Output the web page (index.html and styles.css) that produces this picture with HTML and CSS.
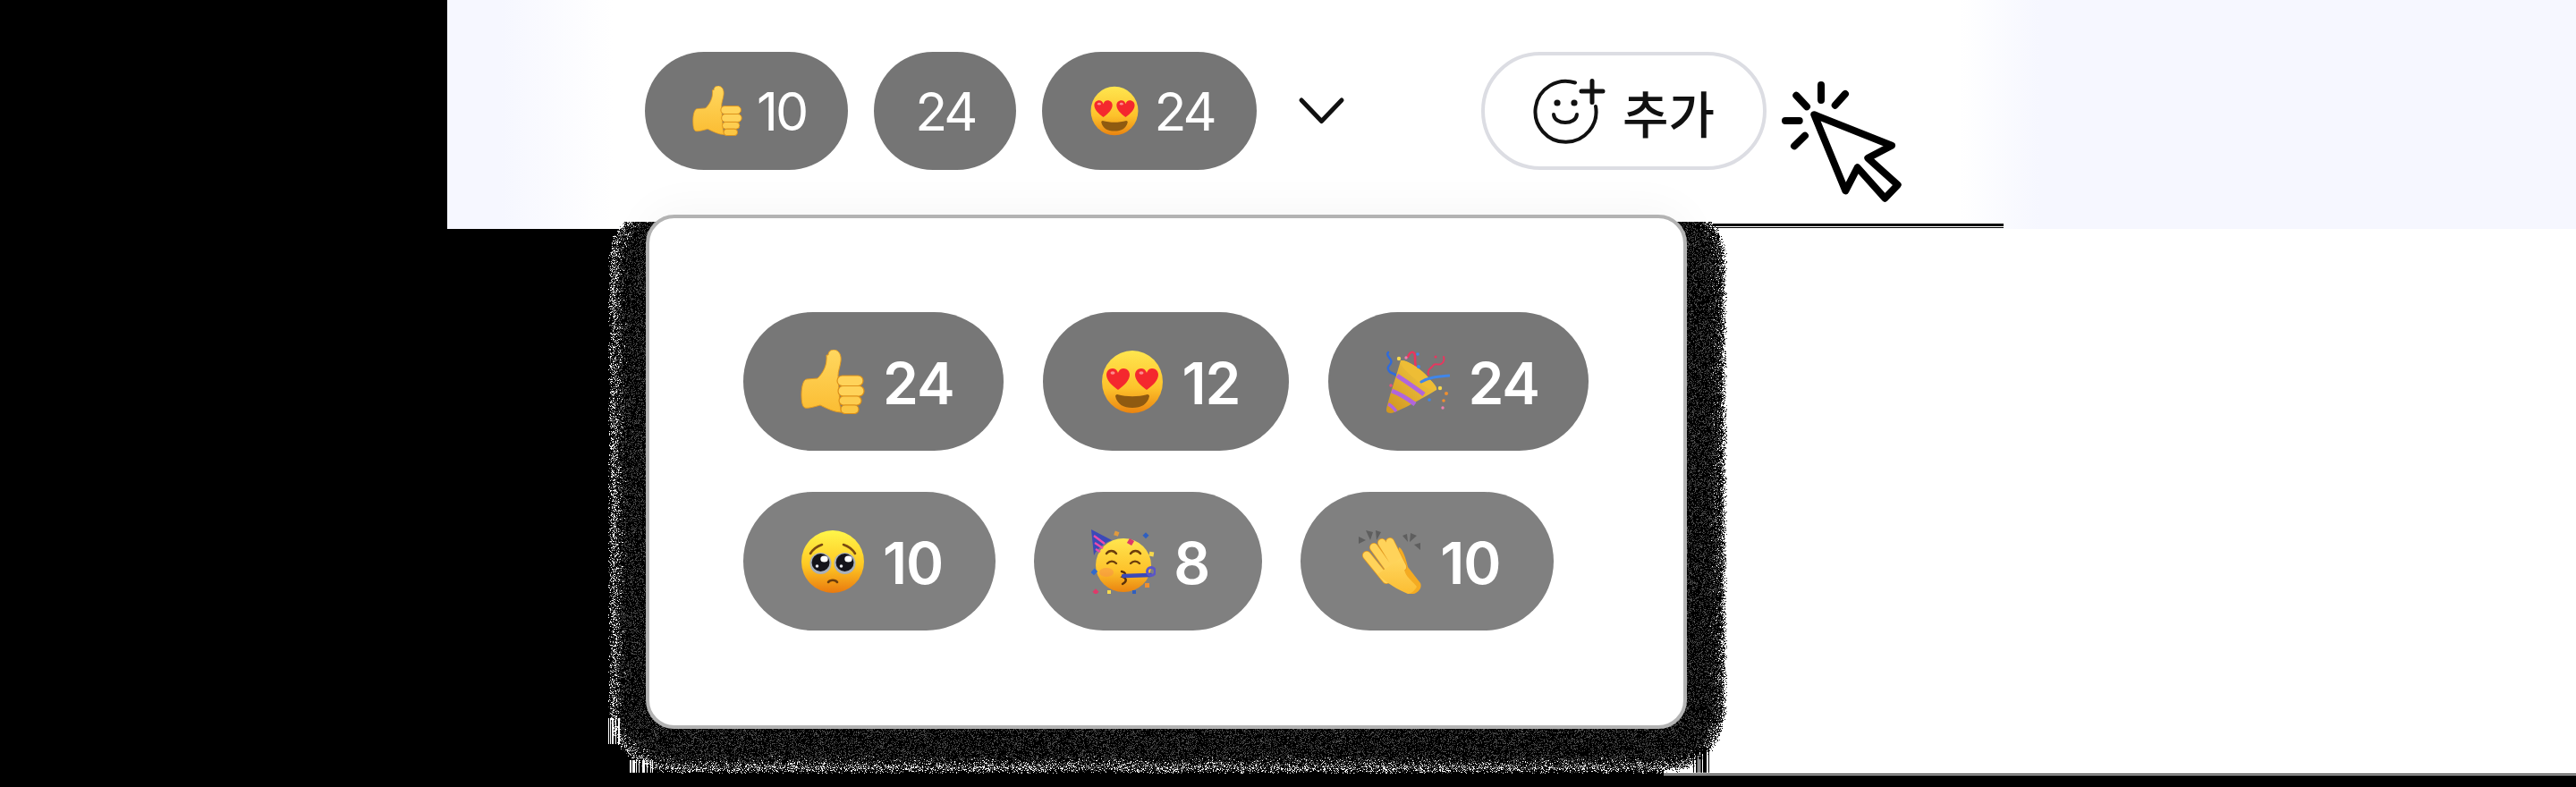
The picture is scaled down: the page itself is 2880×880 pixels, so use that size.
FILE: index.html
```html
<!DOCTYPE html>
<html lang="ko">
<head>
    <meta charset="UTF-8">
    <meta name="viewport" content="width=device-width, initial-scale=1.0">
    <title>Reactions</title>
    <link rel="stylesheet" href="styles.css">
</head>
<body>
    <svg class="defs" aria-hidden="true">
        <defs>
            <linearGradient id="face" x1="0" y1="0" x2="0" y2="1">
                <stop offset="0" stop-color="#ffe64f"/>
                <stop offset="0.6" stop-color="#fdc22b"/>
                <stop offset="1" stop-color="#ea8410"/>
            </linearGradient>
            <linearGradient id="plead" x1="0" y1="0" x2="0" y2="1">
                <stop offset="0" stop-color="#fff64a"/>
                <stop offset="0.55" stop-color="#fec924"/>
                <stop offset="1" stop-color="#ea7a0e"/>
            </linearGradient>
            <linearGradient id="hand" x1="0" y1="0" x2="0" y2="1">
                <stop offset="0" stop-color="#ffd75f"/>
                <stop offset="1" stop-color="#fbbd33"/>
            </linearGradient>
            <linearGradient id="cone" x1="0" y1="1" x2="1" y2="0">
                <stop offset="0" stop-color="#cf9420"/>
                <stop offset="1" stop-color="#f6cf45"/>
            </linearGradient>
            <path id="heart" d="M0 12C-7 7-13 1-13-5c0-4 3-7 7-7 3 0 5 2 6 5 1-3 3-5 6-5 4 0 7 3 7 7 0 6-6 12-13 17z" fill="#f4282e"/>
        </defs>
        <symbol id="e-thumb" viewBox="0 0 72 72">
            <path d="M31 6C31 1 35 0 38 0c5 1 8 6 7 13-1 7-3 11-3 16l2 33 2 8c-8 0-16-4-24-8-7 2-14 4-17 3-3-1-4-7-4-15 0-8 2-17 6-17l12-1c6-6 11-14 10-26z" fill="url(#hand)" stroke="#e39a20" stroke-width="1"/>
            <rect x="41" y="29" width="29" height="11.500" rx="5.700" fill="#ffd35a" stroke="#dd9019" stroke-width="1.200"/>
            <rect x="42" y="40.500" width="29" height="11.500" rx="5.700" fill="#ffd35a" stroke="#dd9019" stroke-width="1.200"/>
            <rect x="43" y="52" width="25" height="10" rx="5" fill="#fdcd50" stroke="#dd9019" stroke-width="1.200"/>
            <rect x="45" y="62" width="20" height="9.500" rx="4.700" fill="#fbc643" stroke="#dd9019" stroke-width="1.200"/>
        </symbol>
        <symbol id="e-hearts" viewBox="0 0 72 72">
            <ellipse cx="36" cy="36" rx="34" ry="35" fill="url(#face)"/>
            <path d="M19 50c11 3 23 3 34 0 1 0 2 1 2 2-2 9-9 13-19 13s-17-4-19-13c0-1 1-2 2-2z" fill="#8f5a10"/>
            <use href="#heart" x="20" y="33"/>
            <use href="#heart" x="52" y="33"/>
            <ellipse cx="14" cy="26" rx="2.500" ry="1.800" fill="#ff8d8d"/>
            <ellipse cx="46" cy="26" rx="2.500" ry="1.800" fill="#ff8d8d"/>
        </symbol>
        <symbol id="e-popper" viewBox="0 0 72 72">
            <path d="M3 3c-4 5 6 7 3 12-2 4-5 4-2 9 2 3 6 2 8 5" fill="none" stroke="#2f6bdc" stroke-width="2.400" stroke-linecap="round"/>
            <path d="M25 8c3-7 8-7 8 0 0 5 1 12 0 18" fill="none" stroke="#e8365f" stroke-width="2.600" stroke-linecap="round"/>
            <path d="M48 28c-2-6 3-7 5-10 2-4 6 0 9-2 3-1 4-5 3-8" fill="none" stroke="#e8365f" stroke-width="2" stroke-linecap="round"/>
            <path d="M1 68C1 62 12 30 17 12c7-1 20 8 28 16 9 10 13 14 12 17C42 54 14 70 6 71c-3 0-5-1-5-3z" fill="url(#cone)"/>
            <path d="M13 29c9 6 21 14 30 21" stroke="#b066dc" stroke-width="5" fill="none"/>
            <path d="M7 46c8 3 18 9 26 15" stroke="#b066dc" stroke-width="5" fill="none"/>
            <path d="M3 61c3 1 6 4 9 8" stroke="#b066dc" stroke-width="3.500" fill="none"/>
            <path d="M17 12c6-1 20 8 28 16 9 10 13 14 12 17-6 1-16-5-25-13S16 18 17 12z" fill="#eebd35"/>
            <path d="M40 36c8-5 18-6 31-7" fill="none" stroke="#3f86ea" stroke-width="3.200" stroke-linecap="round"/>
            <circle cx="15" cy="10" r="2.200" fill="#f6d84c"/>
            <circle cx="23" cy="9" r="1.700" fill="#ef7fb0"/>
            <circle cx="37" cy="19" r="2" fill="#3f86ea"/>
            <circle cx="36" cy="5" r="1.800" fill="#3f86ea"/>
            <circle cx="56" cy="8" r="1.500" fill="#e8365f"/>
            <circle cx="6" cy="40" r="1.800" fill="#e8527a"/>
            <circle cx="61" cy="43" r="2.200" fill="#f6d84c"/>
            <circle cx="68" cy="49" r="2" fill="#ef8f2f"/>
            <circle cx="49" cy="56" r="1.800" fill="#3f86ea"/>
            <circle cx="65" cy="57" r="1.800" fill="#ef8f2f"/>
            <circle cx="64" cy="65" r="1.700" fill="#ef7fb0"/>
        </symbol>
        <symbol id="e-plead" viewBox="0 0 72 72">
            <circle cx="36" cy="36" r="35" fill="url(#plead)"/>
            <path d="M11 27c3-5 7-8 13-10M61 27c-3-5-7-8-13-10" fill="none" stroke="#7a4a10" stroke-width="2.600" stroke-linecap="round"/>
            <circle cx="22.500" cy="38" r="12" fill="#a9b0bb"/>
            <circle cx="49.500" cy="38" r="12" fill="#a9b0bb"/>
            <circle cx="22.500" cy="37" r="10" fill="#14131a"/>
            <circle cx="49.500" cy="37" r="10" fill="#14131a"/>
            <ellipse cx="26.500" cy="33" rx="4.200" ry="3.600" fill="#fff"/>
            <ellipse cx="53.500" cy="33" rx="4.200" ry="3.600" fill="#fff"/>
            <circle cx="18.500" cy="41" r="1.800" fill="#e8e8ee"/>
            <circle cx="45.500" cy="41" r="1.800" fill="#e8e8ee"/>
            <path d="M31 59c2-3 8-3 10 0" fill="none" stroke="#6b3d0c" stroke-width="2.600" stroke-linecap="round"/>
        </symbol>
        <symbol id="e-party" viewBox="0 0 72 72">
            <ellipse cx="36" cy="40" rx="31" ry="30" fill="url(#face)"/>
            <ellipse cx="17" cy="48" rx="8" ry="5" fill="#f6914a" opacity="0.550"/>
            <path d="M0 0l23 12c-8 3-16 9-20 17z" fill="#3b49b8"/>
            <path d="M3 7l12 9M4 15l9 6M5 22l5 3" stroke="#ee4ca9" stroke-width="2.400"/>
            <path d="M17 27c3-4 8-4 11 0M44 27c3-4 8-4 11 0M18 38c3-3 7-3 10 0M44 38c3-3 7-3 10 0" fill="none" stroke="#6b3d0c" stroke-width="2.400" stroke-linecap="round"/>
            <path d="M34 47c4 1 6 3 1 6 5 2 5 5 0 8" fill="none" stroke="#5a300a" stroke-width="2.400" stroke-linecap="round"/>
            <path d="M36 52l30-1" stroke="#3b49b8" stroke-width="4.400" stroke-linecap="round"/>
            <circle cx="67" cy="47" r="4.500" fill="none" stroke="#5a55c8" stroke-width="3"/>
            <rect x="41" y="11" width="6" height="6" fill="#dd3a6a" transform="rotate(30 44 14)"/>
            <rect x="26" y="2" width="5" height="5" fill="#e09a3e" transform="rotate(20 28 4)"/>
            <rect x="59" y="4" width="5" height="5" fill="#2f5fc0" transform="rotate(45 61 6)"/>
            <rect x="65" y="25" width="5" height="5" fill="#f6d84c" transform="rotate(10 67 27)"/>
            <rect x="1" y="44" width="5" height="6" fill="#3169cc" transform="rotate(45 3 47)"/>
            <rect x="3" y="67" width="5" height="5" fill="#dd3a6a" transform="rotate(45 5 69)"/>
            <rect x="18" y="68" width="4" height="4" fill="#f6d84c"/>
            <rect x="46" y="68" width="4" height="4" fill="#2f5fc0"/>
            <rect x="60" y="60" width="5" height="5" fill="#ef8f2f"/>
        </symbol>
        <symbol id="e-clap" viewBox="0 0 72 72">
            <path d="M1 8l8 4-8 4zM9 1l8 2-3 9zM20 1l6 2-5 9zM50 7l5-2 1 9zM59 4l7 3-8 7zM63 17l7-2 0 8z" fill="#5e5e5e"/>
            <path d="M46 20c4 1 8 13 10 22l14 18c2 4-1 9-5 11-4 2-8 1-10 0L40 60z" fill="#f4ab22"/>
            <g fill="none" stroke-linecap="round">
                <g stroke="#e39a20" stroke-width="10">
                    <path d="M10 29l22 27M18 20l23 32M27 15l19 31M36 14l14 28"/>
                </g>
                <g stroke="#ffd35a" stroke-width="8.500">
                    <path d="M10 29l22 27M18 20l23 32M27 15l19 31M36 14l14 28"/>
                </g>
            </g>
            <path d="M22 50l26-18c4 8 3 14 7 20 3 4 8 8 11 12-2 4-6 8-10 8-10-4-24-12-34-22z" fill="url(#hand)"/>
        </symbol>
    </svg>

    <header class="band">
        <div class="reactions">
            <span class="chip">
                <svg class="emoji-sm"><use href="#e-thumb"/></svg>
                <span>10</span>
            </span>
            <span class="chip chip-plain"><span>24</span></span>
            <span class="chip">
                <svg class="emoji-sm"><use href="#e-hearts"/></svg>
                <span>24</span>
            </span>
        </div>
        <svg class="chevron" width="65" height="40" viewBox="0 0 65 40">
            <path d="M10 8l22.500 23.500L55 8" fill="none" stroke="#111" stroke-width="5" stroke-linecap="round" stroke-linejoin="round"/>
        </svg>
        <button class="add-btn">
            <svg class="smile" width="76" height="70" viewBox="0 0 76 70">
                <path d="M45 3.500A34 34 0 1 0 68 30" fill="none" stroke="#111" stroke-width="4" stroke-linecap="round"/>
                <path d="M64 1.500v24M52 13h24" fill="none" stroke="#111" stroke-width="5" stroke-linecap="round"/>
                <circle cx="25" cy="26" r="3.600" fill="#111"/>
                <circle cx="44" cy="26" r="3.600" fill="#111"/>
                <path d="M21 39c1 12 25 12 26 0" fill="none" stroke="#111" stroke-width="4" stroke-linecap="round"/>
            </svg>
            <span>추가</span>
        </button>
        <svg class="cursor" width="140" height="140" viewBox="0 0 140 140">
            <path d="M36.300 38.300L123 72.700 96.300 86.700 129.700 116.700 115.300 131.700 84.700 97.300 71.300 123.300z" fill="#fff" stroke="#000" stroke-width="8" stroke-linejoin="round"/>
            <path d="M44 5v17M16.300 16.700L28 29.300M71 15L59.700 27.700M4 45h15.700M26 61.700L14 73.300" fill="none" stroke="#000" stroke-width="8" stroke-linecap="round"/>
        </svg>
        <div class="band-rule"></div>
    </header>

    <main class="lower">
        <canvas id="grain" class="grain" width="1262" height="618"></canvas>
        <div class="panel">
            <div class="panel-row">
                <span class="pill">
                    <svg class="emoji"><use href="#e-thumb"/></svg>
                    <span>24</span>
                </span>
                <span class="pill">
                    <svg class="emoji"><use href="#e-hearts"/></svg>
                    <span>12</span>
                </span>
                <span class="pill">
                    <svg class="emoji"><use href="#e-popper"/></svg>
                    <span>24</span>
                </span>
            </div>
            <div class="panel-row row-light">
                <span class="pill">
                    <svg class="emoji"><use href="#e-plead"/></svg>
                    <span>10</span>
                </span>
                <span class="pill">
                    <svg class="emoji"><use href="#e-party"/></svg>
                    <span>8</span>
                </span>
                <span class="pill">
                    <svg class="emoji"><use href="#e-clap"/></svg>
                    <span>10</span>
                </span>
            </div>
        </div>
        <div class="lower-rule"></div>
    </main>
    <script src="script.js"></script>
</body>
</html>
```

FILE: styles.css
```css
body {
    margin: 0;
    width: 2880px;
    height: 880px;
    overflow: hidden;
    background: #000;
    font-family: Inter, "Noto Sans CJK KR", sans-serif;
}
.defs {
    display: block;
    width: 0;
    height: 0;
}
svg {
    overflow: visible;
}
.band {
    position: relative;
    display: flex;
    align-items: center;
    height: 256px;
    margin-left: 500px;
    padding: 0 0 8px 221px;
    box-sizing: border-box;
    background: linear-gradient(90deg, #f6f7ff 60px, #fff 185px, #fff 1690px, #f6f7ff 1780px);
}
.reactions {
    display: flex;
    gap: 29px;
}
.chip {
    display: flex;
    align-items: center;
    gap: 16px;
    height: 132px;
    padding: 0 47px 0 53px;
    border-radius: 66px;
    background: #757575;
    color: #fff;
    font-size: 59px;
    font-weight: 400;
    letter-spacing: -3px;
}
.chip-plain {
    padding: 0 46px;
}
.emoji-sm {
    width: 56px;
    height: 56px;
}
.chevron {
    margin-left: 40px;
}
.add-btn {
    display: flex;
    align-items: center;
    justify-content: center;
    gap: 22px;
    width: 319px;
    height: 132px;
    margin-left: 146px;
    padding: 0 0 0 3px;
    box-sizing: border-box;
    border: 4px solid #dcdde3;
    border-radius: 66px;
    background: #fff;
    color: #111;
    font-family: "Noto Sans CJK KR", sans-serif;
    font-size: 56px;
    font-weight: 500;
}
.cursor {
    position: absolute;
    left: 1492px;
    top: 90px;
}
.band-rule {
    position: absolute;
    left: 1415px;
    top: 250px;
    width: 325px;
    height: 1px;
    border-top: 3px solid #000;
    border-bottom: 1px solid #000;
    background: #fff;
}
.lower {
    position: relative;
    display: flow-root;
    height: 611px;
    background: linear-gradient(90deg, #000 1860px, #fff 1860px);
}
.grain {
    position: absolute;
    left: 674px;
    top: -8px;
}
.panel {
    position: relative;
    display: flex;
    flex-direction: column;
    gap: 46px;
    width: 1164px;
    height: 575px;
    margin: -16px 0 0 722px;
    padding: 105px;
    box-sizing: border-box;
    border: 4px solid #b3b3b3;
    border-radius: 32px;
    background: #fff;
    box-shadow: 0 -6px 50px rgba(0, 0, 0, 0.04);
}
.panel-row {
    display: flex;
    gap: 44px;
}
.pill {
    display: flex;
    align-items: center;
    gap: 20px;
    height: 155px;
    padding: 0 55px 0 64px;
    border-radius: 78px;
    background: #777;
    color: #fff;
    font-size: 64px;
    font-weight: 600;
    letter-spacing: -1px;
}
.pill span {
    padding-top: 3px;
}
.row-light {
    gap: 43px;
}
.row-light .pill {
    padding-right: 59px;
    background: #808080;
}
.emoji {
    width: 72px;
    height: 72px;
}
.lower-rule {
    position: absolute;
    left: 1860px;
    right: 0;
    top: 609px;
    height: 1px;
    background: #000;
}
```

FILE: script.js
```js
// dithered shadow around the panel, same noise every load
const canvas = document.getElementById('grain');
const ctx = canvas.getContext('2d');
const img = ctx.createImageData(canvas.width, canvas.height);

let seed = 20240611;
function rnd() {
    seed = (seed + 0x6d2b79f5) | 0;
    let t = Math.imul(seed ^ (seed >>> 15), 1 | seed);
    t = (t + Math.imul(t ^ (t >>> 7), 61 | t)) ^ t;
    return ((t ^ (t >>> 14)) >>> 0) / 4294967296;
}

// shape in canvas coordinates, its top is cut off by the canvas
const cx = 631, cy = 295, hw = 626, hh = 322, r = 70;

function edgeDist(x, y) {
    const qx = Math.abs(x - cx) - hw + r;
    const qy = Math.abs(y - cy) - hh + r;
    const d = Math.hypot(Math.max(qx, 0), Math.max(qy, 0)) + Math.min(Math.max(qx, qy), 0) - r;
    return -d;
}

function setPixel(x, y, v) {
    const i = (y * canvas.width + x) * 4;
    img.data[i] = v;
    img.data[i + 1] = v;
    img.data[i + 2] = v;
    img.data[i + 3] = 255;
}

for (let y = 0; y < canvas.height; y++) {
    for (let x = 0; x < canvas.width; x++) {
        const e = edgeDist(x, y);
        if (e - rnd() * 7 < 0) continue;
        const w = Math.max(0, 1 - e / 22);
        // the right edge has far fewer white specks than the left and bottom
        const white = (x > cx && y < 560 ? 0.25 : 0.55) * w * w;
        const p = rnd();
        let v = 0;
        if (p < white) {
            v = 255;
        } else if (p < white + 0.3) {
            v = 40 + rnd() * (50 + w * 60);
        }
        setPixel(x, y, v);
    }
}

// striped bits in the corners of the shadow
function stripes(x0, x1, y0, y1, v) {
    for (let x = x0; x < x1; x++) {
        if (rnd() < 0.5) continue;
        for (let y = y0; y < y1; y++) setPixel(x, y, v);
    }
}
stripes(1219, 1238, 587, 616, 0);
stripes(6, 20, 555, 584, 255);
stripes(30, 56, 602, 616, 255);

ctx.putImageData(img, 0, 0);
```
